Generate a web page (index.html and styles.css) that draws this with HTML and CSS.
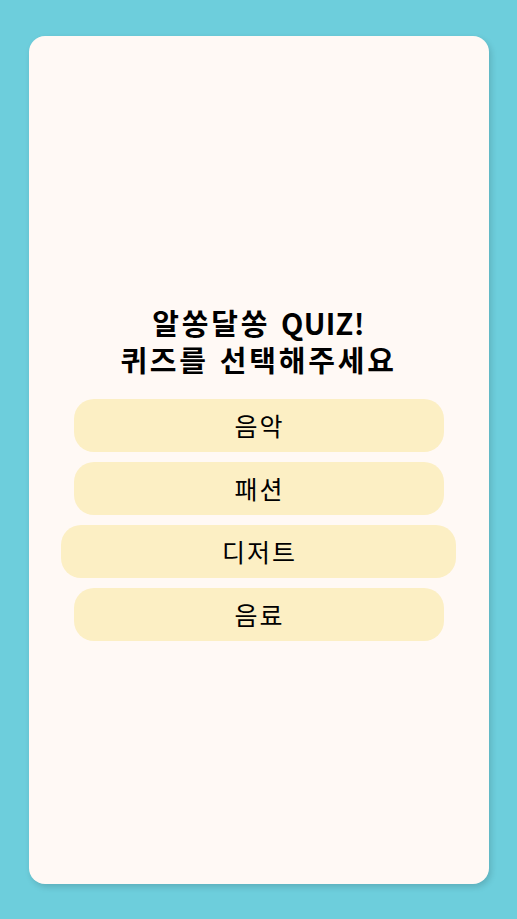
FILE: index.html
```html
<!DOCTYPE html>
<html lang="ko">
<head>
<meta charset="utf-8">
<title>알쏭달쏭 QUIZ!</title>
<link rel="stylesheet" href="styles.css">
</head>
<body>
<div class="page">
  <main class="card">
    <h1 class="title">알쏭달쏭 <span class="latin">QUIZ!</span><br>퀴즈를 선택해주세요</h1>
    <div class="choices">
      <button class="choice">음악</button>
      <button class="choice">패션</button>
      <button class="choice choice-active">디저트</button>
      <button class="choice">음료</button>
    </div>
  </main>
</div>
</body>
</html>
```

FILE: styles.css
```css
* { box-sizing: border-box; }
html, body { margin: 0; padding: 0; }
body {
  background: #6dcedc;
  font-family: "Noto Sans CJK KR", "Noto Sans", sans-serif;
  color: #000;
}
.page {
  height: 919px;
  padding: 36px 0 35px;
}
.card {
  width: 460px;
  height: 100%;
  margin: 0 auto;
  background: #fff9f5;
  border-radius: 16px;
  box-shadow: 2px 3px 6px rgba(0, 0, 0, 0.15);
  display: flex;
  flex-direction: column;
  align-items: center;
  justify-content: center;
  padding-top: 24px;
}
.title {
  margin: 0 0 21px;
  font-size: 29px;
  line-height: 37px;
  font-weight: 700;
  letter-spacing: 2.8px;
  text-align: center;
}
.latin {
  letter-spacing: 0.3px;
}
.choices {
  display: flex;
  flex-direction: column;
  align-items: center;
  gap: 10px;
  width: 100%;
}
.choice {
  width: 370px;
  height: 53px;
  border: none;
  border-radius: 20px;
  background: #fcefc4;
  font-family: inherit;
  font-size: 25px;
  letter-spacing: 2px;
  color: #000;
  padding: 0 0 0 2px;
}
.choice-active {
  width: 395px;
}
```
